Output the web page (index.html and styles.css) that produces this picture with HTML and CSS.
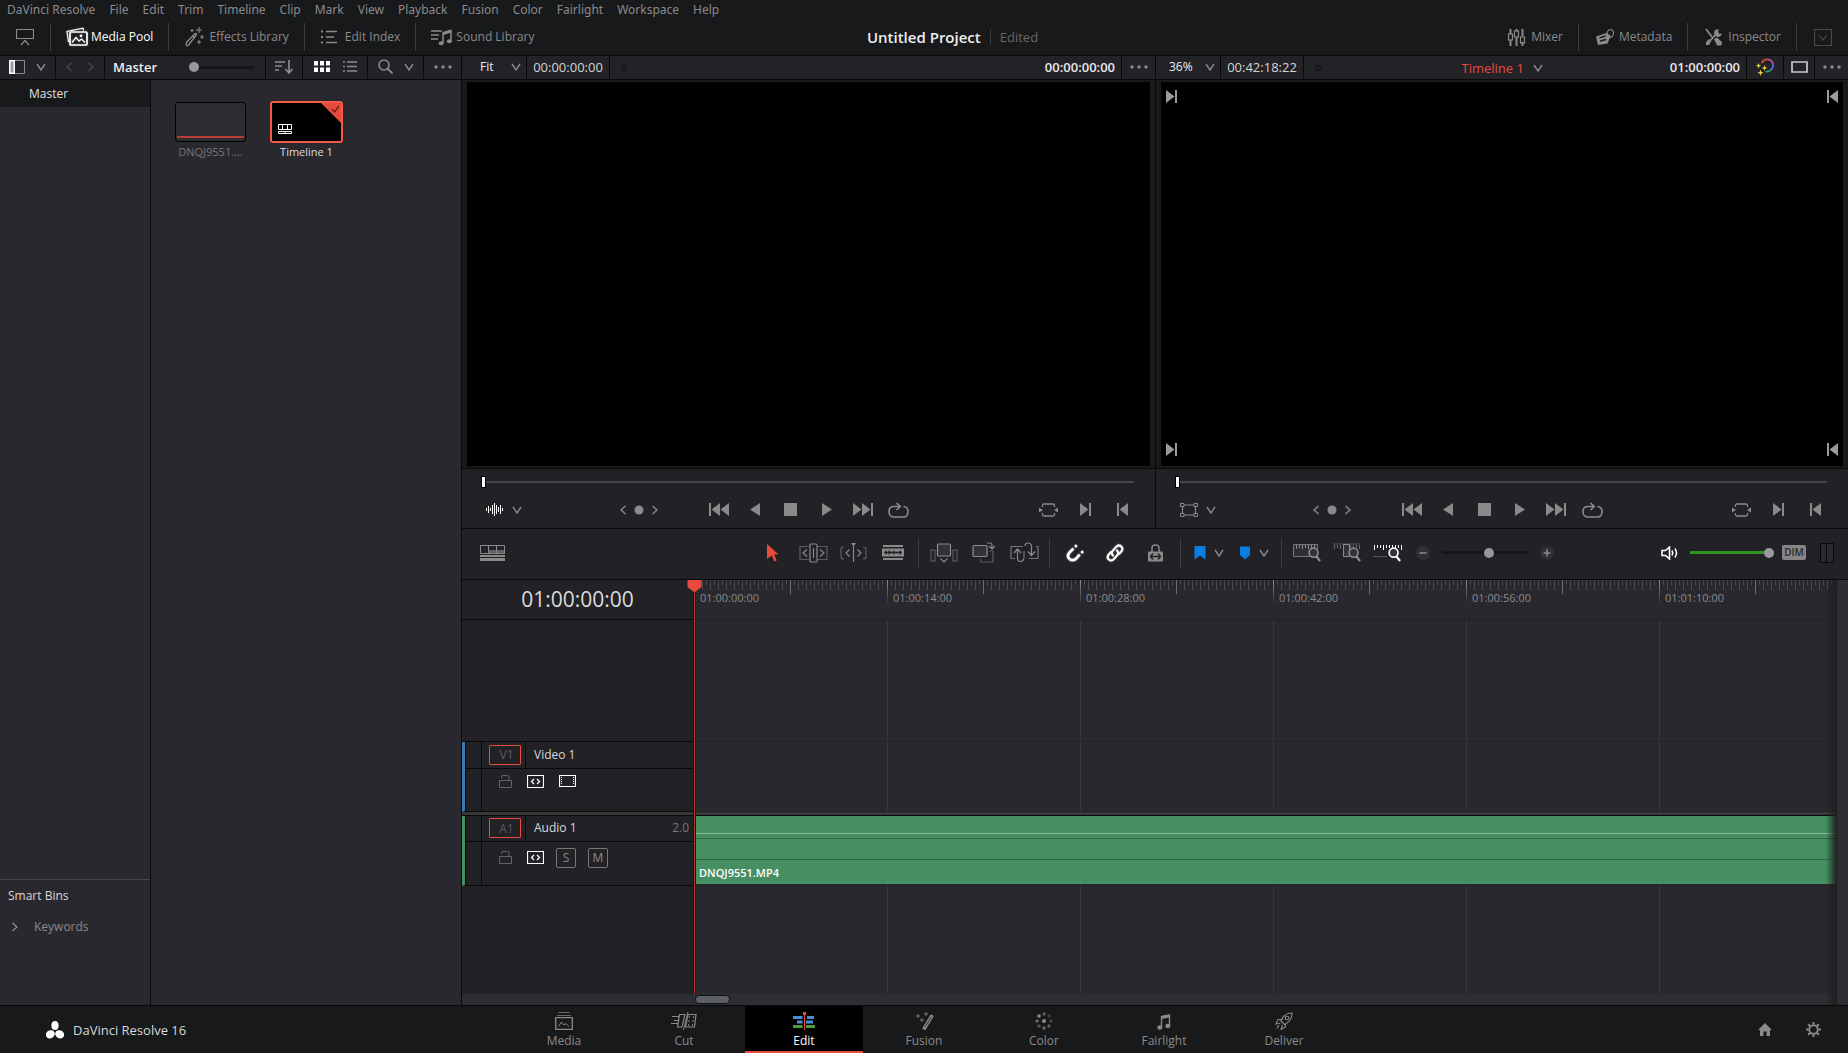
FILE: index.html
```html
<!doctype html>
<html lang="en">

<head>
	<meta charset="utf-8">
	<title>DaVinci Resolve - Untitled Project</title>
	<link rel="stylesheet" href="styles.css">
</head>

<body>
	<!-- icon sprite -->
	<svg class="sprite">
		<symbol id="chev" viewBox="0 0 10 8"><path d="M1 1l4 6 4-6" fill="none" stroke="currentColor" stroke-width="1.4"/></symbol>
		<symbol id="left" viewBox="0 0 6 10"><path d="M5.500 1L1 5l4.500 4" fill="none" stroke="currentColor" stroke-width="1.400"/></symbol>
		<symbol id="right" viewBox="0 0 6 10"><path d="M.5 1L5 5 .5 9" fill="none" stroke="currentColor" stroke-width="1.400"/></symbol>
		<symbol id="dots" viewBox="0 0 18 4"><g fill="currentColor"><circle cx="2" cy="2" r="1.700"/><circle cx="9" cy="2" r="1.700"/><circle cx="16" cy="2" r="1.700"/></g></symbol>
		<symbol id="first" viewBox="0 0 20 13"><path d="M0 0h2v13H0zM11 0v13L2.500 6.500zM20 0v13l-8.500-6.500z" fill="currentColor"/></symbol>
		<symbol id="last" viewBox="0 0 20 13"><path d="M18 0h2v13h-2zM9 0v13l8.500-6.500zM0 0v13l8.500-6.500z" fill="currentColor"/></symbol>
		<symbol id="back" viewBox="0 0 10 13"><path d="M10 0v13L0 6.500z" fill="currentColor"/></symbol>
		<symbol id="play" viewBox="0 0 10 13"><path d="M0 0v13l10-6.500z" fill="currentColor"/></symbol>
		<symbol id="stop" viewBox="0 0 13 13"><path d="M0 0h13v13H0z" fill="currentColor"/></symbol>
		<symbol id="loop" viewBox="0 0 21 16"><path d="M6 4.500C2.800 4.500 1 6.500 1 9.500S2.800 15 6 15h9c3.200 0 5-2.300 5-5.500s-1.800-5-4.500-5M6 4.500h6M8.500 1l3.800 3.500L8.500 8" fill="none" stroke="currentColor" stroke-width="1.600"/></symbol>
		<symbol id="match" viewBox="0 0 19 14"><path d="M3.500 4V2.500Q3.500 1 5 1h9q1.500 0 1.500 1.500V4M3.500 10v1.500Q3.500 13 5 13h9q1.500 0 1.500-1.500V10" fill="none" stroke="currentColor" stroke-width="1.300"/><path d="M0 4.500v5L4 7zM19 4.500v5L15 7z" fill="currentColor"/></symbol>
		<symbol id="out" viewBox="0 0 11 13"><path d="M9 0h2v13H9zM0 0v13l8.500-6.500z" fill="currentColor"/></symbol>
		<symbol id="in" viewBox="0 0 11 13"><path d="M0 0h2v13H0zM11 0v13L2.500 6.500z" fill="currentColor"/></symbol>
		<symbol id="dot" viewBox="0 0 10 10"><circle cx="5" cy="5" r="4.500" fill="currentColor"/></symbol>
		<symbol id="lock" viewBox="0 0 13 13"><path d="M.5 5.500h12v7H.5zM2.500 3V2Q2.500 .5 4 .5h4.500q1.500 0 1.500 1.500v3.500" fill="none" stroke="currentColor"/></symbol>
		<symbol id="auto" viewBox="0 0 17 13"><path d="M.5.500h16v12H.5z" fill="none" stroke="currentColor" stroke-width="1.200"/><path d="M7 4L4.500 6.500 7 9M10 4l2.500 2.500L10 9" fill="none" stroke="currentColor" stroke-width="1.300"/></symbol>
		<symbol id="glass" viewBox="0 0 14 16"><circle cx="6" cy="6" r="4.800" fill="#333237" stroke="currentColor" stroke-width="1.800"/><path d="M9 10l4 5" stroke="currentColor" stroke-width="2.400"/></symbol>
	</svg>

	<nav class="menu">
		<a href="#">DaVinci Resolve</a>
		<a href="#">File</a>
		<a href="#">Edit</a>
		<a href="#">Trim</a>
		<a href="#">Timeline</a>
		<a href="#">Clip</a>
		<a href="#">Mark</a>
		<a href="#">View</a>
		<a href="#">Playback</a>
		<a href="#">Fusion</a>
		<a href="#">Color</a>
		<a href="#">Fairlight</a>
		<a href="#">Workspace</a>
		<a href="#">Help</a>
	</nav>

	<header class="header">
		<div class="panels">
			<button class="square" aria-label="Full height"><svg width="18" height="17" viewBox="0 0 18 17"><path d="M.5.500h17v9H.5zM5 16l4-4.500 4 4.500" fill="none" stroke="currentColor" stroke-width="1.200"/></svg></button>
			<button class="on glow"><svg width="22" height="20" viewBox="0 0 22 20"><path d="M2.500 15L1 4.500 17 1.200l.5 2.300" fill="none" stroke="currentColor" stroke-width="1.200"/><rect x="4" y="5" width="17" height="13" rx="1" fill="none" stroke="currentColor" stroke-width="1.700"/><path d="M6 15.500l4-5 3 3.500 2.500-2 3.500 3.500" fill="none" stroke="currentColor" stroke-width="1.300"/><circle cx="15" cy="8.800" r="1.400" fill="currentColor"/></svg>Media Pool</button>
			<button><svg width="22" height="20" viewBox="0 0 22 20"><path d="M2.500 18.500q-1-1 0-3L11 6.500q1.500-.5 1.500 1L5 17.500q-1.500 1.500-2.500 1zM9 9l2 2" fill="none" stroke="currentColor" stroke-width="1.300"/><path d="M15 0v6M12 3h6M18 8v4M16 10h4M8 2v3M6.500 3.500h3M15 13v4M13 15h4" stroke="currentColor" stroke-width="1.100"/></svg>Effects Library</button>
			<button><svg width="22" height="14" viewBox="0 0 22 14"><path d="M6 1.500h11M6 7h8M6 12.500h11" stroke="currentColor" stroke-width="1.700"/><path d="M1 1.500h2M1 7h2M1 12.500h2" stroke="currentColor" stroke-width="2.200"/></svg>Edit Index</button>
			<button><svg width="22" height="17" viewBox="0 0 22 17"><path d="M0 2h11M0 6h8M0 10h7" stroke="currentColor" stroke-width="1.400"/><path d="M12 14V4l8-2.500V12" fill="none" stroke="currentColor" stroke-width="1.500"/><path d="M12 4.500l8-2.500" stroke="currentColor" stroke-width="3"/><ellipse cx="10.200" cy="14.200" rx="2.500" ry="2" fill="currentColor"/><ellipse cx="18.300" cy="12.300" rx="2.500" ry="2" fill="currentColor"/></svg>Sound Library</button>
		</div>
		<div class="title">
			<h1>Untitled Project</h1>
			<span>Edited</span>
		</div>
		<div class="panels end">
			<button><svg width="22" height="17" viewBox="0 0 22 17"><g fill="none" stroke="currentColor" stroke-width="1.200"><path d="M4.500 0v5M4.500 11v6M10.500 0v2M10.500 8v9M16.500 0v7M16.500 13v4" stroke-width="2"/><rect x="2.500" y="5" width="4" height="6"/><rect x="8.500" y="2" width="4" height="6"/><rect x="14.500" y="8" width="4" height="6"/></g></svg>Mixer</button>
			<button><svg width="22" height="18" viewBox="0 0 22 18"><path d="M2 8.500L12.500 5l4 3-3 7.500L4 17z" fill="currentColor"/><path d="M5.500 9.800l6-1.800M6 13l6-1.500" stroke="#18191b" stroke-width="1.400"/><path d="M14 8.500c-2-3-.5-7 2.500-7s4 4 2 6.500-4 1-3.500-1.500" fill="none" stroke="currentColor" stroke-width="1.200"/></svg>Metadata</button>
			<button><svg width="22" height="18" viewBox="0 0 22 18"><path d="M3 1l6 8M15 4L6 14" stroke="currentColor" stroke-width="1.800"/><path d="M13 1.500a4 4 0 1 0 6 4l-2.500.500-1.500-2 1-2.500zM11 11l3-1.500 5 4.500-.5 3.500H14zM3 14l3-3 2 2-2 4H3z" fill="currentColor"/></svg>Inspector</button>
			<button class="square dim" aria-label="Expand"><svg width="18" height="17" viewBox="0 0 18 17"><path d="M.5.500h17v16H.5zM5 6l4 5 4-5" fill="none" stroke="currentColor" stroke-width="1.200"/></svg></button>
		</div>
	</header>

	<main class="main">
		<section class="pool">
			<div class="bar">
				<button class="w-55" aria-label="Bin list"><svg width="16" height="14" viewBox="0 0 16 14"><path d="M.5.500h15v13H.5z" fill="none" stroke="currentColor"/><path d="M.8.800h4.400v12.400H.8z" fill="#999" stroke="#fff" stroke-width="1.500"/></svg><svg width="10" height="8"><use href="#chev"/></svg></button>
				<div class="cell w-48 dim"><button aria-label="Back"><svg width="6" height="10"><use href="#left"/></svg></button><button aria-label="Forward"><svg width="6" height="10"><use href="#right"/></svg></button></div>
				<div class="cell bin-name"><b>Master</b><input type="range" class="range" value="0" aria-label="Thumbnail size"></div>
				<button class="w-36" aria-label="Sort"><svg width="18" height="14" viewBox="0 0 18 14"><path d="M0 2h10M0 6h7M0 10h4M14 0v12M10.500 9l3.500 4 3.500-4" fill="none" stroke="currentColor" stroke-width="1.700"/></svg></button>
				<div class="cell w-64"><button class="on" aria-label="Thumbnail view"><svg width="16" height="11" viewBox="0 0 16 11"><path d="M0 0h4v4.500H0zM6 0h4v4.500H6zM12 0h4v4.500h-4zM0 6.500h4V11H0zM6 6.500h4V11H6zM12 6.500h4V11h-4z" fill="currentColor"/></svg></button><button aria-label="List view"><svg width="14" height="11" viewBox="0 0 14 11"><path d="M0 1h2M4 1h10M0 5.500h2M4 5.500h10M0 10h2M4 10h10" stroke="currentColor" stroke-width="1.500"/></svg></button></div>
				<button class="w-55" aria-label="Search"><svg width="15" height="15" viewBox="0 0 15 15"><circle cx="6" cy="6" r="5" fill="none" stroke="currentColor" stroke-width="1.600"/><path d="M9.500 9.500l5 5" stroke="currentColor" stroke-width="1.800"/></svg><svg width="10" height="8"><use href="#chev"/></svg></button>
				<button class="w-36" aria-label="Options"><svg width="18" height="4"><use href="#dots"/></svg></button>
			</div>
			<aside class="bins">
				<a href="#" class="bin">Master</a>
				<div class="smart">
					<h2>Smart Bins</h2>
					<a href="#"><svg width="6" height="10"><use href="#right"/></svg>Keywords</a>
				</div>
			</aside>
			<div class="clips">
				<button class="clip-thumb">
					<div class="thumb"></div>
					DNQJ9551....
				</button>
				<button class="clip-thumb selected">
					<div class="thumb">
						<svg width="20" height="20" class="corner" viewBox="0 0 20 20"><path d="M0 0h20v20z" fill="#e64b3d"/><path d="M11 6l2.500 3L18 3" fill="none" stroke="#6b1d16" stroke-width="1.300"/></svg>
						<svg width="14" height="10" viewBox="0 0 14 10"><path d="M.5.500h13v5H.5zM4.500.500v5M9.500.500v5M.5 7.500h13v2H.5zM7 7.500v2" fill="none" stroke="#fff"/></svg>
					</div>
					Timeline 1
				</button>
			</div>
		</section>

		<section class="work">
			<div class="viewers">
				<div class="viewer">
					<div class="bar viewer-bar">
						<div>
							<label class="cell zoom wide"><select aria-label="Source zoom"><option>Fit</option></select><svg width="10" height="8"><use href="#chev"/></svg></label>
							<span class="cell tc">00:00:00:00</span>
							<i class="ring"></i>
						</div>
						<div></div>
						<div>
							<strong>00:00:00:00</strong>
							<button class="w-33" aria-label="Source options"><svg width="18" height="4"><use href="#dots"/></svg></button>
						</div>
					</div>
					<div class="screen"><div></div></div>
					<div class="controls">
						<input type="range" class="scrub" value="0" aria-label="Source position">
						<div class="transport">
							<div>
								<button class="mode on" aria-label="Waveform"><svg width="18" height="13" viewBox="0 0 18 13"><path d="M.5 5v3M2.500 3v7M4.500 5v3M6.500 2v9M8.500 0v13M10.500 2v9M12.500 4v5M14.500 2v9M16.500 5v3" stroke="currentColor"/></svg><svg width="10" height="8"><use href="#chev"/></svg></button>
								<div class="keys"><button aria-label="Previous marker"><svg width="6" height="10"><use href="#left"/></svg></button><button aria-label="Marker"><svg width="10" height="10"><use href="#dot"/></svg></button><button aria-label="Next marker"><svg width="6" height="10"><use href="#right"/></svg></button></div>
							</div>
							<div class="play">
								<button aria-label="First frame"><svg width="20" height="13"><use href="#first"/></svg></button>
								<button aria-label="Play reverse"><svg width="10" height="13"><use href="#back"/></svg></button>
								<button aria-label="Stop"><svg width="13" height="13"><use href="#stop"/></svg></button>
								<button aria-label="Play"><svg width="10" height="13"><use href="#play"/></svg></button>
								<button aria-label="Last frame"><svg width="20" height="13"><use href="#last"/></svg></button>
								<button aria-label="Loop"><svg width="21" height="16"><use href="#loop"/></svg></button>
							</div>
							<div class="marks">
								<button aria-label="Match frame"><svg width="19" height="14"><use href="#match"/></svg></button>
								<button aria-label="Mark in"><svg width="11" height="13"><use href="#out"/></svg></button>
								<button aria-label="Mark out"><svg width="11" height="13"><use href="#in"/></svg></button>
							</div>
						</div>
					</div>
				</div>

				<div class="viewer">
					<div class="bar viewer-bar">
						<div>
							<label class="cell zoom"><select aria-label="Timeline zoom"><option>36%</option></select><svg width="10" height="8"><use href="#chev"/></svg></label>
							<span class="cell tc">00:42:18:22</span>
							<i class="ring"></i>
						</div>
						<label class="timeline-name"><select aria-label="Timeline"><option>Timeline 1</option></select><svg width="10" height="8"><use href="#chev"/></svg></label>
						<div>
							<strong>01:00:00:00</strong>
							<button class="w-36" aria-label="Bypass grades"><svg width="18" height="18" viewBox="0 0 18 18"><g fill="none" stroke-width="1.700"><path d="M5.500 5Q8 1 12 1.500" stroke="#e0453c"/><path d="M12 1.500q4 .5 5 4.500" stroke="#c05a9e"/><path d="M17 6q.5 4-3 6.500" stroke="#4a78d8"/><path d="M14 12.500q-2 1.500-4.500 1" stroke="#3aa657"/></g><path d="M2.500 5l.7 2 2 .7-2 .7-.7 2-.7-2-2-.7 2-.7zM8.500 7l.7 2.300 2.300.7-2.300.7-.7 2.300-.7-2.300L5.500 10l2.300-.7zM4.500 11.500l.8 2.500 2.500.8-2.500.8-.8 2.400-.8-2.400-2.500-.8 2.500-.8z" fill="#e6dc4a"/></svg></button>
							<button class="w-30" aria-label="Single viewer"><svg width="17" height="12" viewBox="0 0 17 12"><path d="M1 1h15v10H1z" fill="none" stroke="#c8c8c8" stroke-width="1.700"/></svg></button>
							<button class="w-33" aria-label="Timeline options"><svg width="18" height="4"><use href="#dots"/></svg></button>
						</div>
					</div>
					<div class="screen"><div class="corners">
						<svg width="11" height="13"><use href="#out"/></svg>
						<svg width="11" height="13"><use href="#in"/></svg>
						<svg width="11" height="13"><use href="#out"/></svg>
						<svg width="11" height="13"><use href="#in"/></svg>
					</div></div>
					<div class="controls">
						<input type="range" class="scrub" value="0" aria-label="Timeline position">
						<div class="transport">
							<div>
								<button class="mode" aria-label="Transform"><svg width="18" height="14" viewBox="0 0 18 14"><path d="M2.500 2h13v10h-13z" fill="none" stroke="currentColor" stroke-width="1.200"/><path d="M.5.500h3.500v3H.5zM14 .5h3.500v3H14zM.5 10.500h3.500v3H.5zM14 10.500h3.500v3H14z" fill="#222126" stroke="currentColor"/></svg><svg width="10" height="8"><use href="#chev"/></svg></button>
								<div class="keys"><button aria-label="Previous edit"><svg width="6" height="10"><use href="#left"/></svg></button><button aria-label="Edit point"><svg width="10" height="10"><use href="#dot"/></svg></button><button aria-label="Next edit"><svg width="6" height="10"><use href="#right"/></svg></button></div>
							</div>
							<div class="play">
								<button aria-label="First frame"><svg width="20" height="13"><use href="#first"/></svg></button>
								<button aria-label="Play reverse"><svg width="10" height="13"><use href="#back"/></svg></button>
								<button aria-label="Stop"><svg width="13" height="13"><use href="#stop"/></svg></button>
								<button aria-label="Play"><svg width="10" height="13"><use href="#play"/></svg></button>
								<button aria-label="Last frame"><svg width="20" height="13"><use href="#last"/></svg></button>
								<button aria-label="Loop"><svg width="21" height="16"><use href="#loop"/></svg></button>
							</div>
							<div class="marks">
								<button aria-label="Match frame"><svg width="19" height="14"><use href="#match"/></svg></button>
								<button aria-label="Mark in"><svg width="11" height="13"><use href="#out"/></svg></button>
								<button aria-label="Mark out"><svg width="11" height="13"><use href="#in"/></svg></button>
							</div>
						</div>
					</div>
				</div>
			</div>

			<div class="edit">
				<div class="toolbar">
					<button class="view-options" aria-label="Timeline view options"><svg width="25" height="16" viewBox="0 0 25 16"><path d="M.5.500h24v8H.5zM8.500.500v8M16.500.500v8" fill="none" stroke="currentColor"/><path d="M9 5h15v3H9z" fill="currentColor" opacity=".6"/><path d="M0 10h25v2H0zM0 13h25v3H0z" fill="currentColor"/></svg></button>
					<div class="tools">
						<button aria-label="Selection"><svg width="12" height="18" viewBox="0 0 12 18"><path d="M0 0l11.500 10.500H7.200l2.500 6-2.400 1L4.800 11.500 0 15z" fill="#e64b3d"/></svg></button>
						<button aria-label="Trim"><svg width="29" height="20" viewBox="0 0 29 20"><g fill="none" stroke="currentColor" stroke-width="1.200"><path d="M10 3.500H1v13h9M19 3.500h9v13h-9" opacity=".55"/><rect x="11" y="1" width="7" height="18" rx="1"/><path d="M14.500 5v10M8 6.500L4 10l4 3.500M21 6.500l4 3.500-4 3.500"/></g></svg></button>
						<button aria-label="Dynamic trim"><svg width="27" height="20" viewBox="0 0 27 20"><g fill="none" stroke="currentColor" stroke-width="1.200"><path d="M4 4Q1 4 1 6v8q0 2 3 2M23 4q3 0 3 2v8q0 2-3 2" opacity=".6"/><path d="M13.500 1v18M9.500 6.500L6 10l3.500 3.500M17.500 6.500L21 10l-3.500 3.500"/></g><path d="M11 0h5l-2.500 3.500z" fill="currentColor"/></svg></button>
						<button aria-label="Blade"><svg width="22" height="15" viewBox="0 0 22 15"><path d="M1 0h20v2H1zM0 3.500h22v8H0zM1 13h20v2H1z" fill="currentColor"/><path d="M2 7.500h18M4 5.500v4M7 5.500v4M9 6.500v2M12 5.500v4M15 6.500v2M18 5.500v4" stroke="#222126" stroke-width="1.400"/></svg></button>
						<hr>
						<button aria-label="Insert"><svg width="28" height="20" viewBox="0 0 28 20"><g fill="none" stroke="currentColor" stroke-width="1.200"><rect x="1" y="7" width="4" height="11" opacity=".55"/><rect x="23" y="7" width="4" height="11" opacity=".55"/><rect x="7.500" y="1" width="13" height="12" rx="1" fill="#333237"/><path d="M10.500 15.500l3.500 3.500 3.500-3.500"/></g></svg></button>
						<button aria-label="Overwrite"><svg width="24" height="21" viewBox="0 0 24 21"><g fill="none" stroke="currentColor" stroke-width="1.200"><path d="M9 17v3h12V9h-4" opacity=".55"/><rect x="1" y="3.500" width="14" height="11" rx="1" fill="#333237"/><path d="M15 1h3.500Q20 1 20 3v3M17 4l3 3 3-3"/></g></svg></button>
						<button aria-label="Replace"><svg width="29" height="21" viewBox="0 0 29 21"><g fill="none" stroke="currentColor" stroke-width="1.200"><path d="M5 16.500H1v-12h12M14 16.500V9M26 4.500h2v12h-9" opacity=".8"/><path d="M4 11l3.500-4 3.500 4M7.500 7v9q0 3.500 3 3.500t3-3M15 4q0-3 3-3t3.500 3v9M18 9.500l3.500 4 3.500-4"/></g></svg></button>
						<hr>
						<button class="on glow" aria-label="Snapping"><svg width="19" height="18" viewBox="0 0 19 18"><path d="M7.500 4.500L3.500 8.500q-3 3.500-.2 6.200t6.500.3l4-4.500" fill="none" stroke="currentColor" stroke-width="2.800"/><path d="M9 3L10.700 1.200M15.200 9l2-1.700" stroke="currentColor" stroke-width="2.600"/></svg></button>
						<button class="on glow" aria-label="Linked selection"><svg width="18" height="18" viewBox="0 0 18 18"><g fill="none" stroke="currentColor" stroke-width="2.200" stroke-linecap="round"><path d="M7 11.500Q4.700 8.800 7 6.500l3.500-4q2.500-2 4.700 0t.3 4.700L13 10"/><path d="M11 6.500q2.300 2.700 0 5l-3.500 4q-2.500 2-4.700 0t-.3-4.700L5 8"/></g></svg></button>
						<button aria-label="Position lock"><svg width="15" height="18" viewBox="0 0 15 18"><path d="M4 8V4q0-3 3.500-3T11 4v4" fill="none" stroke="currentColor" stroke-width="1.500"/><rect y="7.500" width="15" height="10" rx="1" fill="currentColor"/><path d="M5 9.500l-2.500 3L5 15.500M10 9.500l2.500 3-2.500 3M3 12.500h9" fill="none" stroke="#222126" stroke-width="1.400"/></svg></button>
						<hr>
						<button class="mark" aria-label="Flag"><svg width="12" height="14" viewBox="0 0 12 14"><path d="M.5 0h11v13.500L6 9.500l-5.500 4z" fill="#0a7de0"/></svg><svg width="10" height="8"><use href="#chev"/></svg></button>
						<button class="mark" aria-label="Marker"><svg width="12" height="14" viewBox="0 0 12 14"><path d="M2 .5h8q1 0 1 1V9l-5 4.500L1 9V1.500q0-1 1-1z" fill="#0a7de0"/></svg><svg width="10" height="8"><use href="#chev"/></svg></button>
						<hr>
						<button aria-label="Full extent zoom"><svg width="29" height="19" viewBox="0 0 29 19"><path d="M.5 1.500h24v12H.5z" fill="#333237" stroke="currentColor" opacity=".8"/><path d="M3.500 2v4M6.500 2v3M9.500 2v4M12.500 2v3M15.500 2v4M18.500 2v3M21.500 2v4" stroke="currentColor"/><use href="#glass" x="15" y="4" width="13" height="15"/></svg></button>
						<button aria-label="Detail zoom"><svg width="29" height="19" viewBox="0 0 29 19"><path d="M0 1h27" stroke="currentColor" opacity=".5"/><path d="M1.500 2v4M4.500 2v3M7.500 2v4M17.500 2v3M20.500 2v4M23.500 2v3M26.500 2v4" stroke="currentColor" opacity=".7"/><path d="M10.500 1.500h6v12h-6z" fill="#333237" stroke="currentColor"/><use href="#glass" x="15" y="4" width="13" height="15"/></svg></button>
						<button class="on" aria-label="Custom zoom"><svg width="29" height="19" viewBox="0 0 29 19"><path d="M0 13.500h14" stroke="#777" opacity=".6"/><path d="M1.500 2v5M4.500 2v3M7.500 2v3M10.500 2v5M13.500 2v3M16.500 2v3M19.500 2v3M22.500 2v3M25.500 2v3M28.500 2v5" stroke="currentColor"/><use href="#glass" x="15" y="4" width="13" height="15"/></svg></button>
						<button class="round" aria-label="Zoom out"><svg width="14" height="14" viewBox="0 0 14 14"><circle cx="7" cy="7" r="7" fill="#303034"/><path d="M3.500 7h7" stroke="currentColor" stroke-width="1.600"/></svg></button>
						<input type="range" class="range zoom-range" value="55" aria-label="Timeline scale">
						<button class="round" aria-label="Zoom in"><svg width="14" height="14" viewBox="0 0 14 14"><circle cx="7" cy="7" r="7" fill="#303034"/><path d="M3.500 7h7M7 3.500v7" stroke="currentColor" stroke-width="1.600"/></svg></button>
					</div>
					<div class="audio">
						<button class="on" aria-label="Mute"><svg width="18" height="14" viewBox="0 0 18 14"><path d="M1 4.500h3.500l4-3.500v12l-4-3.500H1z" fill="none" stroke="currentColor" stroke-width="1.600"/><path d="M11 4.500q1.500 2.500 0 5M14 2.500q3 4.500 0 9" fill="none" stroke="currentColor" stroke-width="1.500"/></svg></button>
						<input type="range" class="range volume" value="100" aria-label="Volume">
						<button class="dim-btn">DIM</button>
						<button class="meter" aria-label="Audio meter"><i></i><i></i></button>
					</div>
				</div>

				<div class="timeline">
					<div class="head-time">01:00:00:00</div>
					<div class="ruler">
						<span>01:00:00:00</span>
						<span>01:00:14:00</span>
						<span>01:00:28:00</span>
						<span>01:00:42:00</span>
						<span>01:00:56:00</span>
						<span>01:01:10:00</span>
					</div>

					<div class="head-empty"></div>
					<div class="lane"></div>

					<div class="track video">
						<div class="track-name"><button class="dest">V1</button><span>Video 1</span></div>
						<div class="track-tools">
							<button aria-label="Lock video"><svg width="13" height="13"><use href="#lock"/></svg></button>
							<button class="on" aria-label="Auto select video"><svg width="17" height="13"><use href="#auto"/></svg></button>
							<button class="on" aria-label="Enable video"><svg width="17" height="12" viewBox="0 0 17 12"><path d="M.5.500h16v11H.5z" fill="none" stroke="currentColor" stroke-width="1.200"/><path d="M2.500 2v8M14.500 2v8" stroke="currentColor" stroke-dasharray="1 1"/></svg></button>
						</div>
					</div>
					<div class="lane"></div>

					<div class="divider"></div>

					<div class="track sound">
						<div class="track-name"><button class="dest">A1</button><span>Audio 1</span><small>2.0</small></div>
						<div class="track-tools">
							<button aria-label="Lock audio"><svg width="13" height="13"><use href="#lock"/></svg></button>
							<button class="on" aria-label="Auto select audio"><svg width="17" height="13"><use href="#auto"/></svg></button>
							<button class="key">S</button>
							<button class="key">M</button>
						</div>
					</div>
					<div class="lane"><div class="clip">DNQJ9551.MP4</div></div>

					<div class="head-empty last"></div>
					<div class="lane last"></div>

					<div class="scroll"><i></i></div>
					<div class="shade"></div>
					<div class="vscroll"></div>
					<div class="playhead"><svg width="15" height="13" viewBox="0 0 15 13"><path d="M.5 0h14v7L7.500 12.500.5 7z" fill="#e64b3d"/></svg></div>
				</div>
			</div>
		</section>
	</main>

	<footer class="footer">
		<div class="brand"><svg width="18" height="18" viewBox="0 0 18 18"><g fill="#fff"><ellipse cx="9" cy="4.500" rx="3.600" ry="4.500"/><ellipse cx="4.300" cy="13.300" rx="4.600" ry="4" transform="rotate(-30 4.300 13.300)"/><ellipse cx="13.700" cy="13.300" rx="4.600" ry="4" transform="rotate(30 13.700 13.300)"/></g></svg>DaVinci Resolve 16</div>
		<nav class="pages">
			<a href="#"><svg width="18" height="18" viewBox="0 0 18 18"><path d="M3 .5h12M2 3.500h14" stroke="currentColor" opacity=".7"/><path d="M.7 5.700h16.600v11.600H.7z" fill="none" stroke="currentColor" stroke-width="1.300"/><path d="M3.500 14.500l3-4.500 2.500 3 2-1.500 3 3" fill="none" stroke="currentColor"/></svg>Media</a>
			<a href="#"><svg width="26" height="18" viewBox="0 0 26 18"><path d="M1 4.500h7M3 8.500h5M0 11.500h7" stroke="currentColor"/><path d="M8.500 2.500H14L11 15H6.500zM17 2.500h8L23.500 15H14.500z" fill="none" stroke="currentColor" stroke-width="1.200"/><path d="M17 0l-4.500 18" stroke="currentColor"/><path d="M18.500 4l-1 10M22.500 4l-1 10" stroke="currentColor" stroke-dasharray="2 2"/></svg>Cut</a>
			<a href="#" class="active"><svg width="22" height="18" viewBox="0 0 22 18"><path d="M0 4h9.500v3H0zM14 4h7v3h-7zM4 8.500h5.500v3H4zM13 8.500h7v3h-7z" fill="#4a8fd6"/><path d="M0 13h9.500v3H0zM13 13h9v3h-9z" fill="#4f9c3e"/><path d="M11.500 1v17" stroke="#e64b3d"/><path d="M10 0h3v2.500l-1.500 1.500L10 2.500z" fill="#e64b3d"/></svg>Edit</a>
			<a href="#"><svg width="20" height="18" viewBox="0 0 20 18"><path d="M17.500 4.500L10.500 16" stroke="currentColor" stroke-width="3.600" stroke-linecap="round"/><path d="M17.300 5L11 15" stroke="#333" stroke-width="1"/><path d="M4 2v4M2 4h4M12 0v4M10 2h4M8 6v4M6 8h4" stroke="currentColor" opacity=".8"/></svg>Fusion</a>
			<a href="#"><svg width="18" height="18" viewBox="0 0 18 18"><g fill="currentColor"><circle cx="9" cy="9" r="2"/><circle cx="9" cy="2" r="1.700" opacity=".6"/><circle cx="14" cy="4" r="1.500" opacity=".4"/><circle cx="16" cy="9" r="1.500" opacity=".5"/><circle cx="14" cy="14" r="1.700" opacity=".6"/><circle cx="9" cy="16" r="1.700" opacity=".7"/><circle cx="4" cy="14" r="1.800" opacity=".5"/><circle cx="2" cy="9" r="1.600" opacity=".8"/><circle cx="4" cy="4" r="1.800"/></g></svg>Color</a>
			<a href="#"><svg width="14" height="16" viewBox="0 0 14 16"><path d="M4.500 13V2.500L12.500 1v11" fill="none" stroke="currentColor" stroke-width="1.400"/><path d="M4.500 3.500L12.500 2" stroke="currentColor" stroke-width="3"/><ellipse cx="2.800" cy="13.500" rx="2.500" ry="2.200" fill="currentColor"/><ellipse cx="10.800" cy="12" rx="2.500" ry="2.200" fill="currentColor"/></svg>Fairlight</a>
			<a href="#"><svg width="18" height="18" viewBox="0 0 18 18"><g fill="none" stroke="currentColor" stroke-width="1.100"><path d="M17 1Q9 1 6 9l3.500 3.500Q17 9 17 1zM6.500 7.500H3L1 12l4.500-1M10.500 11.500V15L6 17.500l1.500-4.500M4 13l-2 3.500"/><circle cx="12" cy="6" r="1.800"/></g></svg>Deliver</a>
		</nav>
		<div class="system">
			<button aria-label="Project manager"><svg width="14" height="13" viewBox="0 0 14 13"><path d="M7 0l7 7h-2v6H8.500V8.500h-3V13H2V7H0z" fill="currentColor"/></svg></button>
			<button aria-label="Project settings"><svg width="15" height="15" viewBox="0 0 15 15"><circle cx="7.500" cy="7.500" r="4.300" fill="none" stroke="currentColor" stroke-width="1.900"/><path d="M7.500 0v2.500M7.500 12.500V15M0 7.500h2.500M12.500 7.500H15M2.200 2.200L4 4M11 11l1.800 1.800M2.200 12.800L4 11M11 4l1.800-1.800" stroke="currentColor" stroke-width="2"/></svg></button>
		</div>
	</footer>
</body>

</html>
```
FILE: styles.css
```css
* {
	box-sizing: border-box;
}

body {
	margin: 0;
	height: 100vh;
	display: grid;
	grid-template-rows: 19px 37px minmax(0, 1fr) 48px;
	background: #18191b;
	color: #8a8a8b;
	font-family: "Open Sans", "Noto Sans", sans-serif;
	font-size: 12px;
	line-height: 16px;
	overflow: hidden;
}

button,
select,
input {
	font: inherit;
	color: inherit;
	margin: 0;
}

button {
	display: flex;
	align-items: center;
	justify-content: center;
	padding: 0;
	border: 0;
	background: none;
}

a {
	color: inherit;
	text-decoration: none;
}

svg {
	display: block;
	flex: none;
}

h1,
h2 {
	margin: 0;
	font-weight: normal;
}

.sprite {
	position: absolute;
	width: 0;
	height: 0;
}

.on {
	color: #fff;
}

.glow svg {
	filter: drop-shadow(0 0 1px rgba(255, 255, 255, 0.3));
}

.dim {
	color: #4a4a4d;
}

/* menu and header */

.menu {
	display: flex;
	align-items: center;
	gap: 14px;
	padding-left: 7px;
	font-family: "Noto Sans", sans-serif;
}

.header {
	display: grid;
	grid-template-columns: 1fr auto 1fr;
	border-bottom: 1px solid #09090a;
}

.panels {
	display: flex;
	align-items: center;
}

.panels button {
	height: 28px;
	gap: 3px;
	padding: 0 15px;
	border-right: 1px solid #3c3d40;
}

.panels button:last-child {
	border-right: 0;
}

.panels button.square {
	width: 51px;
	padding: 0;
}

.panels.end {
	justify-content: flex-end;
}

/* the left padding balances the status text, so the name stays centred */
.title {
	display: flex;
	align-items: center;
	padding-left: 57px;
	font-size: 13px;
	color: #67686a;
}

.title h1 {
	font-size: 15px;
	font-weight: 600;
	color: #eee;
	padding-right: 9px;
}

.title span {
	padding-left: 9px;
	border-left: 1px solid #3c3d40;
}

.main {
	display: grid;
	grid-template-columns: 462px minmax(0, 1fr);
	min-height: 0;
}

/* thin bars above each panel */

.bar {
	display: flex;
	height: 24px;
	background: #232227;
	border-bottom: 1px solid #09090a;
}

.cell,
.bar > button,
.viewer-bar button {
	display: flex;
	align-items: center;
	justify-content: center;
	padding-bottom: 2px;
	border-right: 1px solid #09090a;
}

.pool .bar > button:last-child {
	border-right: 0;
}

.w-30 { width: 31px; }
.w-33 { width: 34px; }
.w-36 { width: 37px; }
.w-48 { width: 49px; gap: 16px; }
.w-55 { width: 56px; gap: 11px; }
.w-64 { width: 65px; gap: 13px; }

/* media pool */

.pool {
	display: grid;
	grid-template-columns: 151px 1fr;
	grid-template-rows: 24px 1fr;
	background: #29282e;
	border-right: 1px solid #09090a;
}

.pool .bar {
	grid-column: 1 / 3;
}

.bar .bin-name {
	flex: 1;
	justify-content: space-between;
	padding: 0 12px 1px 8px;
	color: #eee;
	font-size: 13px;
}

.bin-name b {
	font-weight: 600;
}

.bins {
	display: flex;
	flex-direction: column;
	justify-content: space-between;
	border-right: 1px solid #09090a;
}

.bin {
	padding: 6px 29px 5px;
	background: #18191b;
	color: #e0e0e0;
}

.smart {
	height: 126px;
	padding: 8px;
	border-top: 1px solid #45454a;
}

.smart h2 {
	font-size: 12px;
	color: #d8d8d8;
	margin-bottom: 15px;
}

.smart a {
	display: flex;
	align-items: center;
	gap: 16px;
	padding-left: 4px;
}

.clips {
	display: flex;
	align-items: flex-start;
	gap: 23px;
	padding: 21px 23px;
}

.clip-thumb {
	flex-direction: column;
	gap: 1px;
	width: 73px;
	font-size: 11px;
	color: #77777a;
}

.thumb {
	position: relative;
	display: flex;
	align-items: flex-end;
	width: 71px;
	height: 40px;
	margin: 1px 0;
	background: linear-gradient(#b83c34, #b83c34) center 33px / 67px 2px no-repeat #2c2d31;
	border: 1px solid #000;
	border-radius: 3px;
}

.selected {
	color: #ddd;
}

.selected .thumb {
	width: 73px;
	height: 42px;
	margin: 0;
	padding: 7px 6px;
	background: #000;
	border: 2px solid #f25a4a;
	overflow: hidden;
}

.corner {
	position: absolute;
	top: 0;
	right: 0;
}

/* viewers */

.work {
	display: grid;
	grid-template-rows: 473fr 477fr;
	min-height: 0;
}

.viewers {
	display: grid;
	grid-template-columns: 694fr 692fr;
	min-height: 0;
	border-bottom: 1px solid #09090a;
}

.viewer {
	display: flex;
	flex-direction: column;
	border-right: 1px solid #09090a;
}

.viewer:last-child {
	border-right: 0;
}

.viewer-bar {
	display: grid;
	grid-template-columns: 1fr auto 1fr;
}

.viewer-bar > div {
	display: flex;
	align-items: stretch;
}

.viewer-bar > div:last-child {
	justify-content: flex-end;
}

.viewer-bar > div:last-child button {
	border-right: 0;
	border-left: 1px solid #09090a;
}

.bar .zoom {
	width: 65px;
	padding: 0 5px 2px 13px;
	justify-content: space-between;
}

.bar .zoom.wide {
	padding-left: 18px;
}

select {
	appearance: none;
	border: 0;
	padding: 0;
	background: none;
	outline: none;
}

.zoom select {
	color: #eee;
}

.tc {
	width: 83px;
	font-size: 13px;
	color: #d4d4d4;
}

.ring {
	align-self: center;
	width: 6px;
	height: 6px;
	margin-left: 11px;
	border: 1px solid #0e0e10;
	border-radius: 50%;
}

.viewer-bar strong {
	align-self: center;
	padding: 0 6px 2px 0;
	font-size: 13px;
	font-weight: 600;
	color: #e8e8e8;
}

.timeline-name {
	display: flex;
	align-items: center;
	gap: 8px;
	font-size: 13px;
}

.timeline-name select {
	color: #e64b3d;
}

.screen {
	flex: 1;
	display: flex;
	padding: 2px 5px;
	background: #19191b;
	border-bottom: 1px solid #09090a;
}

.screen > div {
	flex: 1;
	background: #000;
}

.corners {
	display: grid;
	grid-template-columns: auto auto;
	justify-content: space-between;
	align-content: space-between;
	padding: 8px 5px 10px;
	color: #9a9a9a;
}

.controls {
	height: 59px;
	background: #222126;
}

.scrub {
	display: block;
	appearance: none;
	width: calc(100% - 40px);
	height: 12px;
	margin: 7px 20px 0 19px;
	background: linear-gradient(#41474d, #41474d) center / 100% 2px no-repeat;
}

.scrub::-webkit-slider-thumb {
	appearance: none;
	width: 5px;
	height: 12px;
	background: #fff;
	border: 1px solid #000;
}

.transport {
	display: grid;
	grid-template-columns: 1fr auto 1fr;
	align-items: center;
	height: 20px;
	margin-top: 12px;
	padding: 0 24px;
}

.transport > div {
	display: flex;
	align-items: center;
	justify-content: space-between;
}

.mode {
	gap: 8px;
}

.mode svg + svg {
	color: #8a8a8b;
}

.keys {
	display: flex;
	gap: 8px;
	margin-right: 43px;
}

.play button {
	width: 36px;
}

.transport .marks {
	justify-content: flex-end;
	gap: 19px;
}

.marks button {
	width: 18px;
}

/* edit toolbar */

.edit {
	display: flex;
	flex-direction: column;
	min-height: 0;
}

.toolbar {
	display: flex;
	align-items: center;
	height: 51px;
	padding: 0 14px 2px 18px;
	background: #222126;
	border-bottom: 1px solid #09090a;
}

.tools {
	display: flex;
	align-items: center;
	margin-left: 248px;
}

.tools button {
	width: 40px;
	height: 30px;
}

.tools hr {
	width: 1px;
	height: 30px;
	margin: 0 5px;
	border: 0;
	background: #3c3d40;
}

.tools .mark {
	width: 45px;
	gap: 8px;
}

.tools .round {
	width: 32px;
}

.range {
	appearance: none;
	width: 64px;
	height: 10px;
	background: linear-gradient(#161618, #161618) center / 100% 3px no-repeat;
}

.range::-webkit-slider-thumb {
	appearance: none;
	width: 10px;
	height: 10px;
	border-radius: 50%;
	background: #98989a;
}

.range.zoom-range {
	width: 86px;
	margin: 0 3px;
}

.range.volume {
	width: 84px;
	margin-left: 11px;
	background-image: linear-gradient(#2f931f, #2f931f);
}

.audio {
	display: flex;
	align-items: center;
	margin-left: auto;
}

.dim-btn {
	width: 24px;
	height: 15px;
	margin: 0 14px 0 8px;
	border-radius: 2px;
	background: #858588;
	color: #29292c;
	font-size: 10px;
	font-weight: 600;
	line-height: 15px;
}

.meter {
	height: 20px;
}

.meter i {
	width: 7px;
	height: 20px;
	border: 1px solid #09090a;
	background: #2a292f;
}

.meter i + i {
	border-left: 0;
}

/* timeline */

.timeline {
	flex: 1;
	position: relative;
	display: grid;
	grid-template-columns: 232px minmax(0, 1fr);
	grid-template-rows: 40px 122px 70px 4px 70px 1fr 11px;
	background: #222126;
}

.head-time {
	display: flex;
	align-items: center;
	justify-content: center;
	padding-bottom: 1px;
	color: #dcdcdc;
	font-size: 21px;
	border-bottom: 1px solid #09090a;
	border-right: 1px solid #09090a;
}

.ruler {
	display: flex;
	overflow: hidden;
	background: #29282e;
	border-bottom: 1px solid #222126;
}

/* one span covers fourteen seconds */
.ruler span {
	flex: none;
	width: 193px;
	padding: 10px 0 0 6px;
	font-size: 11px;
	color: #8a8a8b;
	background:
		linear-gradient(#909092, #29282e) 0 0 / 1px 25px no-repeat,
		linear-gradient(#6b6c70, #6b6c70) 96px 0 / 1px 14px no-repeat,
		repeating-linear-gradient(to right, #49494e 0 1px, transparent 1px 8px) 0 0 / 192px 10px no-repeat,
		repeating-linear-gradient(to right, transparent 0 4px, #49494e 4px 5px, transparent 5px 8px) 0 0 / 192px 5px no-repeat;
}

.head-empty {
	border-bottom: 1px solid #09090a;
	border-right: 1px solid #09090a;
}

.lane {
	background: repeating-linear-gradient(to right, #37363b 0 1px, transparent 1px 193px) #29282e;
	border-bottom: 1px solid #222126;
}

.last {
	border-bottom: 0;
}

.track {
	display: grid;
	grid-template-rows: 27px 1fr;
	border-bottom: 1px solid #09090a;
	border-right: 1px solid #09090a;
	border-left: 3px solid #3f78ad;
	background: linear-gradient(#09090a, #09090a) 0 0 / 1px 100% no-repeat, linear-gradient(#09090a, #09090a) 16px 0 / 1px 100% no-repeat;
}

.sound {
	grid-template-rows: 26px 1fr;
	border-left-color: #458f63;
}

.track-name {
	display: flex;
	align-items: center;
	padding-left: 24px;
	border-bottom: 1px solid #09090a;
	color: #d8d8d8;
}

.dest {
	width: 32px;
	height: 20px;
	padding: 1px 0 0 3px;
	color: #5c5c60;
	border: 1px solid #e64b3d;
	border-radius: 1px;
}

.track-name span {
	align-self: stretch;
	display: flex;
	align-items: center;
	margin-left: 4px;
	padding-left: 8px;
	border-left: 1px solid #09090a;
}

.track-name small {
	margin-left: auto;
	padding-right: 4px;
	font-size: 12px;
	color: #77777a;
}

.track-tools {
	display: flex;
	align-items: flex-start;
	gap: 15px;
	padding: 6px 0 0 34px;
}

.sound .track-tools {
	align-items: center;
	gap: 12px;
	padding-top: 0;
	padding-bottom: 11px;
}

.track-tools button:first-child {
	color: #636367;
}

.sound .track-tools button:first-child {
	margin-right: 3px;
}

.key {
	width: 20px;
	height: 20px;
	border: 1px solid #77777a;
	border-radius: 2px;
}

.divider {
	grid-column: 1 / 3;
	background: #38383a;
	border-bottom: 1px solid #09090a;
}

.clip {
	height: 68px;
	margin-left: 1px;
	padding: 49px 0 0 4px;
	background:
		linear-gradient(#83b898, #83b898) 0 17px / 100% 1px no-repeat,
		linear-gradient(#2f6646, #2f6646) 0 22px / 100% 1px no-repeat,
		linear-gradient(#2f6646, #2f6646) 0 43px / 100% 1px no-repeat,
		#458f63;
	color: #fff;
	font-size: 11px;
	font-weight: 600;
}

.scroll {
	grid-column: 1 / 3;
	padding: 1px 0 1px 233px;
	background: #2d2e31;
}

.scroll i {
	display: block;
	width: 35px;
	height: 9px;
	border: 1px solid #111;
	border-radius: 4px;
	background: #5b5f66;
}

.vscroll,
.shade {
	position: absolute;
	top: 0;
	bottom: 11px;
	right: 0;
	width: 11px;
	background: #2d2e32;
}

.shade {
	right: 11px;
	bottom: 0;
	background: linear-gradient(to right, rgba(29, 29, 30, 0), #1d1d1e);
}

.playhead {
	position: absolute;
	top: 0;
	bottom: 11px;
	left: 231px;
	width: 3px;
	border: 1px solid #141416;
	border-top: 0;
	border-bottom: 0;
	background: #b0392f;
}

.playhead svg {
	margin-left: -7px;
}

/* footer */

.footer {
	display: grid;
	grid-template-columns: 1fr auto 1fr;
	border-top: 1px solid #09090a;
}

.brand {
	display: flex;
	align-items: center;
	gap: 9px;
	padding-left: 46px;
	color: #d8d8d8;
	font-size: 13px;
}

.pages {
	display: flex;
	gap: 2px;
}

.pages a {
	display: flex;
	flex-direction: column;
	align-items: center;
	justify-content: flex-end;
	gap: 3px;
	width: 118px;
	padding-bottom: 2px;
	border-bottom: 2px solid transparent;
}

.pages .active {
	background: #000;
	border-bottom-color: #e64b3d;
	color: #fff;
}

.system {
	display: flex;
	justify-content: flex-end;
	gap: 34px;
	padding-right: 27px;
}
```
